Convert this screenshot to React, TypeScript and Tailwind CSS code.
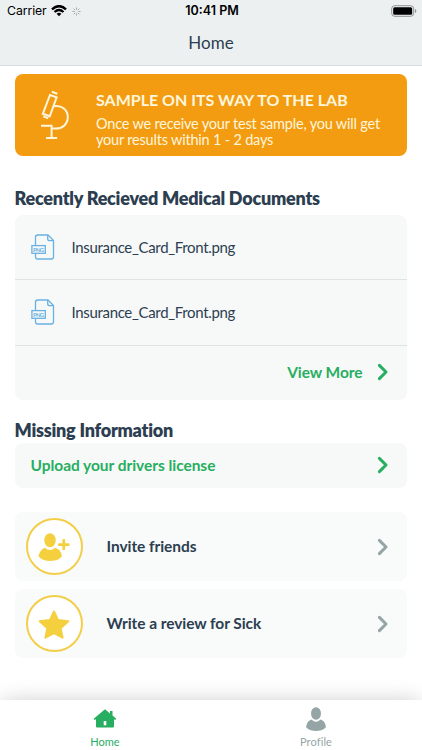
import clsx from 'clsx';
import type { ReactNode } from 'react';

type ActionItem = {
  label: string;
  icon: ReactNode;
};

const DOCUMENTS = ['Insurance_Card_Front.png', 'Insurance_Card_Front.png'];

const Chevron = function ({ className }: { className: string }) {
  return (
    <svg viewBox="0 0 12 18" className={clsx('h-[18px] w-3 shrink-0', className)} fill="none" stroke="currentColor">
      <path d="M2.4 2.4 9 9l-6.6 6.6" strokeWidth="3" strokeLinecap="round" strokeLinejoin="round" />
    </svg>
  );
};

const MicroscopeIcon = function () {
  return (
    <svg viewBox="0 0 30 50" className="h-[50px] w-[30px]" fill="none" stroke="#fff6dc" strokeWidth="2">
      <path d="M9 5 15.6 7.3 8.8 26.3 1.8 23.8z" />
      <path d="M10.8 1.7 16.3 3.7M2.3 26.4 7.3 28.2" />
      <path d="M13 16.2C21 14.8 26.8 20.3 26.8 27c0 7-5.3 11.600-11.800 11.600h-4" />
      <path d="M0 35.700h10.600V48M5 48h11.200" />
    </svg>
  );
};

const PngFileIcon = function () {
  return (
    <svg viewBox="0 0 24 26" className="h-[26px] w-6 shrink-0" fill="none" stroke="#6bb1e0" strokeWidth="1.3">
      <path d="M4.500 11V3.200Q4.500 1 6.700 1H17l5.500 5.600v16.200Q22.500 25 20.300 25H6.700Q4.500 25 4.500 22.800V20" />
      <path d="M16.700 1v3.700Q16.700 6.700 18.700 6.700h3.800" />
      <rect x="0.900" y="11.600" width="13.400" height="7.700" />
      <text
        x="7.600"
        y="17.600"
        textAnchor="middle"
        fontSize="6"
        fontWeight="700"
        fill="#6bb1e0"
        stroke="none"
        textLength="11"
        fontFamily="Lato, sans-serif"
      >
        PNG
      </text>
    </svg>
  );
};

const InviteIcon = function () {
  return (
    <svg viewBox="0 0 32 28" className="h-7 w-8" fill="#f4d03f">
      <ellipse cx="12" cy="7.300" rx="5.700" ry="7" />
      <path d="M7 14.700Q12 19.300 17 14.700C21 15.500 24 19.500 23.800 23.600 21 27 16.500 28 12 28S3.500 27 .5 23.600C1 19.500 3.500 16 7 14.700z" />
      <path d="M25.800 7.500v8.400M21.300 11.700h9" stroke="#f4d03f" strokeWidth="2.800" strokeLinecap="round" />
    </svg>
  );
};

const StarIcon = function () {
  return (
    <svg viewBox="0 0 32 30" className="h-[30px] w-8" fill="#f4d03f" stroke="#f4d03f" strokeWidth="2">
      <path strokeLinejoin="round" d="m16 2.500 4 8.500 10.300 1.200-7.700 7 2 9.500-8.600-4.600-8.600 4.600 2-9.500-7.700-7L12 11z" />
    </svg>
  );
};

const ACTIONS: ActionItem[] = [
  { label: 'Invite friends', icon: <InviteIcon /> },
  { label: 'Write a review for Sick', icon: <StarIcon /> },
];

const StatusBar = function () {
  return (
    <div className="grid h-[22px] grid-cols-3 items-center pr-[5px] pl-[7px] font-['Inter',sans-serif] text-black">
      <div className="flex items-center">
        <span className="text-[12.3px] tracking-[-0.1px]">Carrier</span>
        <svg viewBox="0 0 16 12" className="ml-1 h-3 w-4" fill="none" stroke="black">
          <path d="M1 4.300Q8-2 15 4.300" strokeWidth="2.400" />
          <path d="M3.500 7Q8 3 12.500 7" strokeWidth="2.200" />
          <path d="M8 11.300 5.600 8.800Q8 6.900 10.400 8.800z" fill="black" stroke="none" />
        </svg>
        <svg viewBox="0 0 10 10" className="ml-[5px] h-[9px] w-[9px]" stroke="#92979a" strokeWidth="0.900">
          <path d="M5 0.500v2.500M5 7v2.500M0.500 5H3M7 5h2.500M1.800 1.800l1.800 1.800M6.400 6.400l1.800 1.800M8.200 1.800 6.400 3.600M3.600 6.400 1.800 8.200" />
        </svg>
      </div>
      <span className="text-center text-[12.5px] font-semibold whitespace-nowrap">10:41 PM</span>
      <svg viewBox="0 0 26 12" className="mb-px h-3 w-[26px] justify-self-end">
        <rect x="0.700" y="0.700" width="22" height="10.600" rx="3" fill="none" stroke="#8f9294" />
        <rect x="2.200" y="2.200" width="19" height="7.600" rx="1.500" />
        <path d="M24 4v4q1.300-.7 1.300-2T24 4z" fill="#8f9294" />
      </svg>
    </div>
  );
};

const App = function () {
  return (
    <div className="flex h-[750px] w-[422px] flex-col overflow-hidden bg-white font-['Lato',sans-serif] text-[#2c3e50]">
      <header className="h-[66px] border-b border-[#d9dadd] bg-[#ecf0f1]">
        <StatusBar />
        <h1 className="text-center text-[17px] leading-[42px]">Home</h1>
      </header>

      <main className="flex flex-1 flex-col pt-[7.5px] pr-[15px] pl-[14.5px]">
        <section className="flex h-[82px] rounded-lg bg-[#f39c12] pl-[26px] text-[#fff6dc]">
          <div className="w-[55.5px] pt-[16px]">
            <MicroscopeIcon />
          </div>
          <div className="pt-[16.5px] whitespace-nowrap">
            <h2 className="text-[16px] leading-5 font-bold">SAMPLE ON ITS WAY TO THE LAB</h2>
            <p className="mt-[5.5px] text-[14.5px] leading-4 tracking-[-0.2px]">
              Once we receive your test sample, you will get
              <br />
              your results within 1 - 2 days
            </p>
          </div>
        </section>

        <h2 className="mt-[32px] text-[18px] leading-[21px] font-extrabold tracking-[-0.24px]">
          Recently Recieved Medical Documents
        </h2>
        <section className="mt-[6.5px] h-[185px] rounded-lg bg-[#f7f9f9]">
          {DOCUMENTS.map((name, index) => (
            <div key={index} className="flex h-[65.3px] items-center border-b border-[#dfe3e6] pl-4">
              <PngFileIcon />
              <span className="ml-[17px] text-[15px] tracking-[-0.33px]">{name}</span>
            </div>
          ))}
          <div className="flex h-[53.4px] items-center justify-end pr-[18.5px] text-[#27ae60]">
            <span className="mr-[14px] text-[15.5px] font-bold tracking-[-0.06px]">View More</span>
            <Chevron className="text-[#27ae60]" />
          </div>
        </section>

        <h2 className="mt-[20px] text-[18px] leading-[21px] font-extrabold tracking-[-0.24px]">Missing Information</h2>
        <section className="mt-[2px] flex h-[44.5px] items-center justify-between rounded-lg bg-[#f7f9f9] pr-[18.5px] pl-4 text-[#27ae60]">
          <span className="text-[15.5px] font-bold tracking-[-0.04px]">Upload your drivers license</span>
          <Chevron className="text-[#27ae60]" />
        </section>

        <section className="mt-[24.5px] flex flex-col gap-2">
          {ACTIONS.map((action) => (
            <div key={action.label} className="flex h-[69px] items-center rounded-lg bg-[#f9fbfb] pr-[18.5px] pl-[11px]">
              <div className="flex h-[57.5px] w-[57.5px] items-center justify-center rounded-full border-2 border-[#f2ce4a] bg-white">
                {action.icon}
              </div>
              <span className="ml-[23.5px] flex-1 text-[15.5px] font-bold tracking-[-0.06px]">{action.label}</span>
              <Chevron className="text-[#95a5a6]" />
            </div>
          ))}
        </section>
      </main>

      <nav className="grid h-[50px] grid-cols-2 bg-white text-[11px] leading-[14px] shadow-[0_0_22px_-2px_rgba(0,0,0,0.22)]">
        <div className="flex flex-col items-center pt-[9px] pr-px text-[#27ae60]">
          <svg viewBox="0 0 24 19" className="h-[19px] w-6" fill="currentColor">
            <path d="M12 0.300 17 4.500V2h2.500v4.600l3.800 3.200-1.100 1.300L21 10.200v7.300q0 1-1 1H4q-1 0-1-1v-7.300l-1.200.9L.7 9.800z" />
            <path d="M10.700 12h2.600v4.300h-2.600z" fill="white" />
          </svg>
          <span className="mt-[7px]">Home</span>
        </div>
        <div className="flex flex-col items-center pt-[7px] pr-px text-[#95a5a6]">
          <svg viewBox="0 0 20 24" className="h-6 w-5" fill="currentColor">
            <ellipse cx="10" cy="6.500" rx="5" ry="6.200" />
            <path d="M5.500 12.500Q10 17 14.500 12.500C18 13.500 20 17 19.800 20.500 17 23.300 13.500 24 10 24S3 23.300.2 20.500C.2 17 2.200 13.500 5.500 12.500z" />
          </svg>
          <span className="mt-1 tracking-[0.1px]">Profile</span>
        </div>
      </nav>
    </div>
  );
};

export default App;
